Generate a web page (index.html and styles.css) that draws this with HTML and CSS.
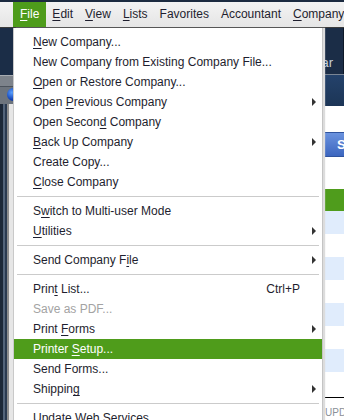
FILE: index.html
```html
<!DOCTYPE html>
<html lang="en">
<head>
    <meta charset="UTF-8">
    <meta name="viewport" content="width=device-width, initial-scale=1.0">
    <title>File menu</title>
    <link rel="stylesheet" href="styles.css">
</head>
<body>
    <div class="topline"></div>
    <nav class="menubar">
        <span class="menubar-item active"><u>F</u>ile</span>
        <span class="menubar-item"><u>E</u>dit</span>
        <span class="menubar-item"><u>V</u>iew</span>
        <span class="menubar-item"><u>L</u>ists</span>
        <span class="menubar-item">Favorites</span>
        <span class="menubar-item">Accountant</span>
        <span class="menubar-item"><u>C</u>ompany</span>
    </nav>

    <div class="workspace">
        <div class="dock">
            <div class="dock-top"></div>
            <div class="dock-bar"></div>
            <div class="dock-globe"><span class="globe"></span></div>
            <div class="dock-frame"></div>
        </div>
        <div class="main">
            <div class="iconbar"><span>Calendar</span></div>
            <div class="iconbar-line"></div>
            <div class="page-header"></div>
            <div class="panel">
                <div class="panel-actions">
                    <span class="blue-button">Start Working</span>
                </div>
                <div class="grid-head"></div>
                <div class="grid-row alt"></div>
                <div class="grid-row"></div>
                <div class="grid-row alt"></div>
                <div class="grid-row"></div>
                <div class="grid-row alt"></div>
                <div class="grid-row"></div>
                <div class="grid-row alt"></div>
                <div class="grid-row last"></div>
                <div class="grid-foot">UPDATE</div>
            </div>
        </div>

        <!-- the open File menu -->
        <div class="dropdown">
            <div class="item"><span><u>N</u>ew Company...</span></div>
            <div class="item"><span>New Company from Existing Company File...</span></div>
            <div class="item"><span><u>O</u>pen or Restore Company...</span></div>
            <div class="item"><span>Open <u>P</u>revious Company</span><i class="arrow"></i></div>
            <div class="item"><span>Open Secon<u>d</u> Company</span></div>
            <div class="item"><span><u>B</u>ack Up Company</span><i class="arrow"></i></div>
            <div class="item"><span>Create Copy...</span></div>
            <div class="item"><span><u>C</u>lose Company</span></div>
            <div class="separator"></div>
            <div class="item"><span>S<u>w</u>itch to Multi-user Mode</span></div>
            <div class="item"><span><u>U</u>tilities</span><i class="arrow"></i></div>
            <div class="separator"></div>
            <div class="item"><span>Send Company F<u>i</u>le</span><i class="arrow"></i></div>
            <div class="separator"></div>
            <div class="item"><span>Prin<u>t</u> List...</span><span class="shortcut">Ctrl+P</span></div>
            <div class="item disabled"><span>Save as PDF...</span></div>
            <div class="item"><span>Print <u>F</u>orms</span><i class="arrow"></i></div>
            <div class="item selected"><span>Printer <u>S</u>etup...</span></div>
            <div class="item"><span>Send Forms...</span></div>
            <div class="item"><span>Shippin<u>g</u></span><i class="arrow"></i></div>
            <div class="separator"></div>
            <div class="item"><span>Update Web Services</span></div>
        </div>
    </div>
</body>
</html>
```

FILE: styles.css
```css
html, body {
    overflow: hidden;
}
body {
    margin: 0;
    width: 344px;
    height: 420px;
    font-family: "Liberation Sans", Arial, sans-serif;
    font-size: 12px;
    color: #1e1e2e;
    background-color: #1b2d47;
}
u {
    text-decoration: underline;
    text-underline-offset: 2px;
}
.topline {
    height: 2px;
    background: #1c2b40;
}
.menubar {
    display: flex;
    height: 25px;
    padding-left: 13px;
    line-height: 25px;
    background: linear-gradient(#f3f3f3, #e5e5e5);
    border-bottom: 1px solid #3c3c3c;
    white-space: nowrap;
}
.menubar-item {
    padding: 0 6px;
}
.menubar-item.active {
    padding: 0 7px;
    color: #ffffff;
    background: #4e9c1b;
}

/* background window */
.workspace {
    position: relative;
    display: flex;
    height: 392px;
}
.dock {
    display: flex;
    flex-direction: column;
    width: 13px;
    flex-shrink: 0;
}
.dock-top {
    height: 47px;
    background: #1b2d47;
}
.dock-bar {
    height: 10px;
    background: #7d838b;
    border-top: 1px solid #a7acb2;
    border-bottom: 1px solid #4c535c;
}
.dock-globe {
    height: 16px;
    background: #6d747d;
    padding-left: 7px;
    padding-top: 1px;
}
.globe {
    display: block;
    width: 12px;
    height: 13px;
    border-radius: 50%;
    background: radial-gradient(circle at 40% 35%, #5aa0ff, #1646b8 60%, #0b2a77);
}
.dock-frame {
    flex: 1;
    background: linear-gradient(to right, #1c2838 0 3px, #53647a 3px 5px, #2a3a50 5px 7px, #8d8d8d 7px 9px, #e6e6e6 9px 13px);
}
.main {
    flex: 1;
    display: flex;
    flex-direction: column;
    overflow: hidden;
}
.iconbar {
    height: 49px;
    display: flex;
    justify-content: flex-end;
    align-items: flex-end;
    padding-right: 10px;
    background: #1b2d47;
    border-right: 1px solid #0d1828;
    color: #c9d1dc;
    font-size: 13px;
    line-height: 22px;
    box-sizing: border-box;
}
.iconbar-line {
    height: 2px;
    background: #7a8594;
}
.page-header {
    height: 33px;
    background: linear-gradient(#24426b, #1c3556);
}
.panel {
    flex: 1;
    background: #ffffff;
    padding-top: 26px;
}
.panel-actions {
    display: flex;
    height: 25px;
    padding-left: 287px;
    margin-bottom: 32px;
    white-space: nowrap;
}
.blue-button {
    padding: 0 12px 0 36px;
    line-height: 23px;
    color: #ffffff;
    font-weight: bold;
    font-size: 13px;
    background: linear-gradient(#6a92de, #3c66bf);
    border: 1px solid #2f539e;
    border-radius: 3px;
}
.grid-head {
    height: 22px;
    background: #4f9c1c;
}
.grid-row {
    height: 23px;
    background: #ffffff;
}
.grid-row.alt {
    background: #e0ecfc;
}
.grid-row.last {
    height: 25px;
    border-bottom: 1px solid #000000;
}
.grid-foot {
    padding-left: 312px;
    padding-top: 8px;
    font-size: 10px;
    color: #8a8f98;
    line-height: 14px;
}

/* open menu */
.dropdown {
    position: absolute;
    top: 0;
    left: 13px;
    width: 308px;
    padding-top: 4px;
    background: #ffffff;
    border-left: 1px solid #c9c9c9;
    box-shadow: 1px 0 0 #c4c4c4, 3px 0 1px #dcdcdc;
    white-space: nowrap;
}
.item {
    display: flex;
    align-items: center;
    height: 20px;
    padding-left: 19px;
}
.item.selected {
    color: #ffffff;
    background: #4f9c1b;
}
.item.disabled {
    color: #a3a3a3;
}
.shortcut {
    margin-left: auto;
    margin-right: 22px;
}
.arrow {
    margin-left: auto;
    margin-right: 6px;
    width: 0;
    height: 0;
    border-left: 4px solid #333333;
    border-top: 4px solid transparent;
    border-bottom: 4px solid transparent;
}
.separator {
    height: 1px;
    margin: 4px 3px;
    background: #cbcbcb;
}
```
